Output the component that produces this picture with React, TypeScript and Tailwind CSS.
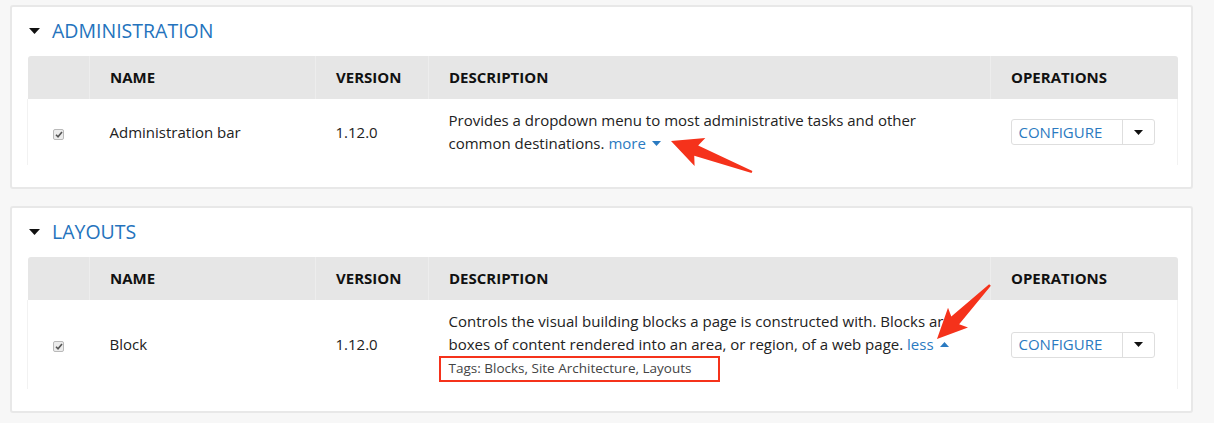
import React from "react";

type Module = {
  title: string;
  name: string;
  version: string;
  lines: string[];
  toggle: "more" | "less";
  tags?: string;
};

const modules: Module[] = [
  {
    title: "ADMINISTRATION",
    name: "Administration bar",
    version: "1.12.0",
    lines: [
      "Provides a dropdown menu to most administrative tasks and other",
      "common destinations.",
    ],
    toggle: "more",
  },
  {
    title: "LAYOUTS",
    name: "Block",
    version: "1.12.0",
    lines: [
      "Controls the visual building blocks a page is constructed with. Blocks are",
      "boxes of content rendered into an area, or region, of a web page.",
    ],
    toggle: "less",
    tags: "Tags: Blocks, Site Architecture, Layouts",
  },
];

const Caret = ({ up = false }: { up?: boolean }) => (
  <svg width="9" height="5" viewBox="0 0 9 5" className="inline-block">
    <path d={up ? "M0 5 L4.5 0 L9 5Z" : "M0 0 L9 0 L4.5 5Z"} fill="currentColor" />
  </svg>
);

const Checkbox = () => (
  <span className="inline-flex h-[11px] w-[11px] items-center justify-center rounded-[2px] border border-[#b9b9b9] bg-[#ececec]">
    <svg width="8" height="7" viewBox="0 0 8 7">
      <path d="M1 3.8 L3 5.8 L7 1" stroke="#555" strokeWidth="1.6" fill="none" />
    </svg>
  </span>
);

// Skitch-style annotation arrow: thin tail widening into a broad head
function arrowPoints(tail: [number, number], tip: [number, number], L: number, W: number) {
  const dx = tip[0] - tail[0];
  const dy = tip[1] - tail[1];
  const len = Math.hypot(dx, dy);
  const ux = dx / len;
  const uy = dy / len;
  const nx = -uy;
  const ny = ux;
  const bx = tip[0] - ux * L;
  const by = tip[1] - uy * L;
  const pts: [number, number][] = [
    [tail[0] + nx * 1.2, tail[1] + ny * 1.2],
    [bx + ux * 4 + nx * 5.5, by + uy * 4 + ny * 5.5],
    [bx + nx * W, by + ny * W],
    tip,
    [bx - nx * W, by - ny * W],
    [bx + ux * 4 - nx * 5.5, by + uy * 4 - ny * 5.5],
    [tail[0] - nx * 1.2, tail[1] - ny * 1.2],
  ];
  return pts.map((p) => p.join(",")).join(" ");
}

const ModuleCard = ({ m }: { m: Module }) => (
  <section className="rounded-[3px] border-2 border-[#e8e8e8] bg-white pl-[15px] pr-[13px] pt-[10px] pb-[22px]">
    <h2 className="mb-[11px] flex items-center gap-[12px] pl-[2px] text-[19.5px] leading-[28px] text-[#2473bd]">
      <svg width="11" height="6" viewBox="0 0 11 6">
        <path d="M0 0 L11 0 L5.5 6Z" fill="#111" />
      </svg>
      {m.title}
    </h2>
    <table className="w-full table-fixed border-collapse text-[15px] text-[#222]">
      <colgroup>
        <col className="w-[62px]" />
        <col className="w-[226px]" />
        <col className="w-[113px]" />
        <col />
        <col className="w-[187px]" />
      </colgroup>
      <thead>
        <tr className="h-[43px] bg-[#e6e6e6] text-left text-[15px] font-bold text-[#111]">
          <th className="rounded-tl-[3px]" />
          <th className="border-l border-[#ededed] px-[20px]">NAME</th>
          <th className="border-l border-[#ededed] px-[20px]">VERSION</th>
          <th className="border-l border-[#ededed] px-[20px]">DESCRIPTION</th>
          <th className="rounded-tr-[3px] border-l border-[#ededed] px-[20px]">OPERATIONS</th>
        </tr>
      </thead>
      <tbody>
        <tr className="leading-[23px]">
          <td className="border-l border-[#f2f2f2] py-[10px] text-center align-middle">
            <Checkbox />
          </td>
          <td className="px-[20px] align-middle">{m.name}</td>
          <td className="px-[20px] align-middle">{m.version}</td>
          <td className="py-[10px] pl-[20px] pr-0 align-middle">
            <div className="whitespace-nowrap">{m.lines[0]}</div>
            <div className="whitespace-nowrap">
              {m.lines[1]}{" "}
              <a className="inline-flex items-center gap-[6px] text-[#2a7ac1]">
                {m.toggle}
                <span className="relative top-[-1px]">
                  <Caret up={m.toggle === "less"} />
                </span>
              </a>
            </div>
            {m.tags && (
              <div className="relative inline-block text-[13.5px] leading-[22px] text-[#444]">
                {m.tags}
                <span className="pointer-events-none absolute -top-[1px] -bottom-[3px] -left-[10px] -right-[29px] border-2 border-[#f5321b]" />
              </div>
            )}
          </td>
          <td className="border-r border-[#f2f2f2] px-[20px] align-middle">
            <div className="inline-flex h-[26px] items-stretch rounded-[3px] border border-[#dedede] bg-white">
              <span className="flex items-center pl-[7px] pr-[20px] text-[#2a7ac1]">CONFIGURE</span>
              <span className="flex w-[32px] items-center justify-center border-l border-[#dedede] text-[#111]">
                <Caret />
              </span>
            </div>
          </td>
        </tr>
      </tbody>
    </table>
  </section>
);

export default function App() {
  return (
    <div className="relative min-h-screen bg-[#f7f7f7] pt-[5px] pl-[10px] pr-[21px] pb-[10px] font-['Open_Sans','Liberation_Sans',sans-serif]">
      <div className="flex flex-col gap-[17px]">
        {modules.map((m) => (
          <ModuleCard key={m.title} m={m} />
        ))}
      </div>

      {/* annotation arrows */}
      <svg
        className="pointer-events-none absolute left-0 top-0"
        width="1214"
        height="423"
        viewBox="0 0 1214 423"
      >
        <polygon points={arrowPoints([752, 172], [671, 141], 31, 15)} fill="#f5321b" />
        <polygon points={arrowPoints([990, 285], [937, 339], 30, 14)} fill="#f5321b" />
      </svg>
    </div>
  );
}
